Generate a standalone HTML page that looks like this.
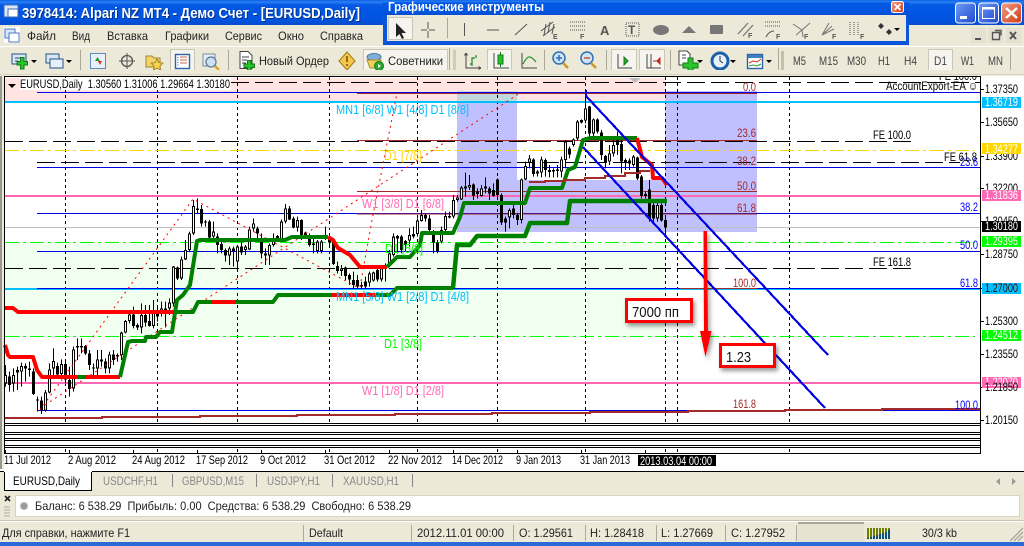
<!DOCTYPE html>
<html><head><meta charset="utf-8"><title>MT4</title>
<style>
html,body{margin:0;padding:0;background:#ece9d8}
svg{display:block}
text{font-family:"Liberation Sans",sans-serif;font-size:12px}
.ui{fill:#222}
.tf{fill:#444}
.ax{fill:#000;font-size:12px}
.w{fill:#fff;font-size:12px}
.br{fill:#a52a2a;font-size:11.5px}
.bl{fill:#0000ff;font-size:11.5px}
.mm{font-size:12.5px}
.c{shape-rendering:crispEdges}
</style></head><body>
<svg xmlns="http://www.w3.org/2000/svg" width="1024" height="546" viewBox="0 0 1024 546">
<defs>
<linearGradient id="tb" x1="0" y1="0" x2="0" y2="1"><stop offset="0" stop-color="#0a5fe8"/><stop offset=".08" stop-color="#2a80f4"/><stop offset=".2" stop-color="#0558e4"/><stop offset=".8" stop-color="#0054e0"/><stop offset="1" stop-color="#0a4ccc"/></linearGradient>
<linearGradient id="bb" x1="0" y1="0" x2="1" y2="1"><stop offset="0" stop-color="#6f9bf5"/><stop offset="1" stop-color="#1e49d0"/></linearGradient>
<linearGradient id="rb" x1="0" y1="0" x2="1" y2="1"><stop offset="0" stop-color="#f0a08a"/><stop offset="1" stop-color="#d03a14"/></linearGradient>
<filter id="sh" x="-30%" y="-30%" width="170%" height="170%"><feDropShadow dx="2" dy="3" stdDeviation="2" flood-color="#000" flood-opacity=".4"/></filter>
</defs>
<rect width="1024" height="546" fill="#ece9d8"/>

<!-- title bar -->
<rect width="1024" height="25" fill="url(#tb)"/>
<rect x="4" y="5" width="14" height="12" fill="#dbe6f8" stroke="#3b6db5"/>
<rect x="8" y="9" width="10" height="8" fill="#fff" stroke="#3b6db5"/>
<text x="22" y="18" font-weight="bold" style="font-size:15px" fill="#00308a" textLength="338" lengthAdjust="spacingAndGlyphs" transform="translate(1 1)">3978414: Alpari NZ MT4 - Демо Счет - [EURUSD,Daily]</text>
<text x="22" y="18" font-weight="bold" style="font-size:15px" fill="#fff" textLength="338" lengthAdjust="spacingAndGlyphs">3978414: Alpari NZ MT4 - Демо Счет - [EURUSD,Daily]</text>
<rect x="955.5" y="3" width="20" height="20" rx="3" fill="url(#bb)" stroke="#fff"/><rect x="960" y="16" width="7" height="3" fill="#fff"/>
<rect x="978.5" y="3" width="20" height="20" rx="3" fill="url(#bb)" stroke="#fff"/><rect x="982.5" y="7.5" width="12" height="11" fill="none" stroke="#fff"/><rect x="982" y="7" width="13" height="2.5" fill="#fff"/>
<rect x="1001.5" y="3" width="20" height="20" rx="3" fill="url(#rb)" stroke="#fff"/><path d="M1006 8l11 10M1017 8l-11 10" stroke="#fff" stroke-width="2.4"/>

<!-- menu -->
<rect y="25" width="1024" height="21" fill="#ece9d8"/>
<rect x="4" y="27" width="16" height="16" fill="#fff"/>
<rect x="5" y="29" width="10" height="9" fill="#dbe6f8" stroke="#4a7ac0"/><rect x="9" y="33" width="10" height="9" fill="#fff" stroke="#4a7ac0"/>
<g class="ui">
<text x="27" y="40" class="ui" textLength="29" lengthAdjust="spacingAndGlyphs">Файл</text>
<text x="72" y="40" class="ui" textLength="18" lengthAdjust="spacingAndGlyphs">Вид</text>
<text x="107" y="40" class="ui" textLength="41" lengthAdjust="spacingAndGlyphs">Вставка</text>
<text x="165" y="40" class="ui" textLength="44" lengthAdjust="spacingAndGlyphs">Графики</text>
<text x="225" y="40" class="ui" textLength="37" lengthAdjust="spacingAndGlyphs">Сервис</text>
<text x="278" y="40" class="ui" textLength="26" lengthAdjust="spacingAndGlyphs">Окно</text>
<text x="320" y="40" class="ui" textLength="43" lengthAdjust="spacingAndGlyphs">Справка</text>
</g>
<rect x="971" y="28" width="15" height="15" fill="#e4e1d2"/><rect x="975" y="38" width="6" height="2" fill="#555"/>
<rect x="988" y="28" width="15" height="15" fill="#e4e1d2"/><path d="M992.5 32.5h7v7h-7zM995 30.5h6v5" fill="none" stroke="#555" stroke-width="1.4"/>
<rect x="1006" y="28" width="15" height="15" fill="#e4e1d2"/><path d="M1010 32l6 7M1016 32l-6 7" stroke="#555" stroke-width="2"/>

<!-- main toolbar -->
<rect y="46" width="1024" height="1" fill="#fff"/>
<rect y="47" width="1024" height="29" fill="#ece9d8"/>
<rect y="74" width="1024" height="1" fill="#d8d4c0"/>
<path class="c" d="M80.5 50v22M228.5 50v22M449.5 48v26M544.5 50v22M606.5 50v22M670.5 50v22M778.5 48v26M1010.5 48v26" stroke="#aca899"/>
<!-- highlighted buttons -->
<g class="c" fill="#f5f4ee" stroke="#c9c7b8">
<rect x="170.5" y="49.5" width="24" height="22"/>
<rect x="363.5" y="49.5" width="84" height="22"/>
<rect x="487.5" y="49.5" width="24" height="22"/>
<rect x="611.5" y="49.5" width="25" height="22"/>
<rect x="639.5" y="49.5" width="25" height="22"/>
<rect x="928.5" y="49.5" width="24" height="22"/>
</g>
<!-- new chart -->
<rect x="12" y="54" width="14" height="10" fill="#d9e6f7" stroke="#26527f"/>
<path d="M15 58h5M15 61h3" stroke="#26527f"/>
<path d="M20.5 57.5h3.5v4h3.5v3.5h-3.500v4h-3.500v-4h-3.500v-3.500h3.500z" fill="#29c42e" stroke="#137a18"/>
<path d="M31 60h6l-3 3z" fill="#000"/>
<!-- profiles -->
<rect x="46" y="54" width="13" height="9" fill="#d9e6f7" stroke="#26527f"/><rect x="50" y="59" width="13" height="9" fill="#e8effa" stroke="#26527f"/>
<path d="M66 60h6l-3 3z" fill="#000"/>
<!-- market watch -->
<rect x="90.5" y="53.5" width="15" height="15" fill="#e8f1fb" stroke="#5d8bbf"/><path d="M95 61l2.500-4 2.500 4z" fill="#1a9a28"/><path d="M98 61h4l-2 4z" fill="#d0301c"/>
<!-- crosshair -->
<circle cx="127" cy="61" r="5.500" fill="none" stroke="#555" stroke-width="1.300"/><path d="M127 53v16M119 61h16" stroke="#555"/>
<!-- folder star -->
<path d="M146 56h6l2 2h6v9h-14z" fill="#f2d46e" stroke="#a58328"/><path d="M157 59l1.800 3.600 4 .6-2.900 2.800.7 4-3.600-1.900-3.600 1.900.7-4-2.900-2.800 4-.6z" fill="#f7d64a" stroke="#a58328"/>
<!-- navigator -->
<rect x="175.500" y="54.500" width="14" height="14" fill="#fff" stroke="#2c62a6" stroke-width="1.400"/><path d="M178 57v9" stroke="#2c62a6" stroke-dasharray="1 1.500"/><path d="M180 57h7M180 60h7M180 63h7" stroke="#d06a50"/>
<!-- data window -->
<rect x="203" y="54" width="12" height="12" fill="#e8eef5" stroke="#7a8a9a"/><circle cx="211" cy="62" r="5" fill="#cfe0f2" stroke="#5a7a9a" stroke-width="1.300"/><path d="M215 66l4 4" stroke="#d9a520" stroke-width="2.400"/>
<!-- new order -->
<path d="M240 51.500h8l4 4v13h-12z" fill="#fff" stroke="#444"/><path d="M242 57h7M242 60h5M242 63h4" stroke="#444"/>
<path d="M247.500 60.500h3.500v3.500h3.500v3.500h-3.500v3.500h-3.500v-3.500h-3.500v-3.500h3.500z" fill="#29c42e" stroke="#137a18"/>
<text x="259" y="65" class="ui" textLength="70" lengthAdjust="spacingAndGlyphs">Новый Ордер</text>
<!-- alert -->
<path d="M347 52l8 9-8 9-8-9z" fill="#f5c84c" stroke="#a07818"/><path d="M347 56v6M347 64v2" stroke="#7a5510" stroke-width="1.600"/>
<!-- experts -->
<ellipse cx="374" cy="57" rx="7" ry="3.500" fill="#7fb0d8" stroke="#4a789f"/><path d="M367 60l14 0-2 8h-9z" fill="#f0d060" stroke="#b08a20"/><circle cx="379" cy="66" r="4.500" fill="#2aa82e" stroke="#137a18"/><path d="M378 64l3 2-3 2z" fill="#fff"/>
<text x="388" y="65" class="ui" textLength="55" lengthAdjust="spacingAndGlyphs">Советники</text>
<!-- chart type icons -->
<g fill="none" stroke="#444"><path d="M466 53v15h15M466 53l-1.500 2.500M466 53l1.500 2.500M481 68l-2.500-1.500M481 68l-2.500 1.500"/><path d="M494 53v15h15M522 53v15h15"/></g>
<path d="M472 66v-8h3M470 64h2M476 58v-3" stroke="#1a8a28" fill="none" stroke-width="1.200"/>
<rect x="498" y="55" width="5" height="9" fill="#27c02e" stroke="#137a18"/><path d="M500.500 52v3M500.500 64v3" stroke="#137a18"/>
<path d="M523 64q4-8 7-7t6 5" stroke="#2a9a2e" fill="none" stroke-width="1.300"/>
<!-- zoom -->
<circle cx="559" cy="58" r="6" fill="#cfe3f7" stroke="#2c6fb7" stroke-width="1.500"/><path d="M556 58h6M559 55v6" stroke="#2c6fb7" stroke-width="1.500"/><path d="M563 63l5 5" stroke="#c89a20" stroke-width="2.600"/>
<circle cx="587" cy="58" r="6" fill="#cfe3f7" stroke="#2c6fb7" stroke-width="1.500"/><path d="M584 58h6" stroke="#d0581c" stroke-width="1.500"/><path d="M591 63l5 5" stroke="#c89a20" stroke-width="2.600"/>
<!-- autoscroll / shift -->
<g fill="none" stroke="#444"><path d="M618 54v14h14M647 54v14h14M651 54v14"/></g>
<path d="M624 57l4 4-4 4z" fill="#2aa82e" stroke="#137a18"/>
<path d="M657 61h-4M660 58l-3 3 3 3z" fill="#c02a14" stroke="#c02a14"/>
<!-- template -->
<path d="M679 51h8l3 3v11h-11z" fill="#fff" stroke="#444"/><path d="M682 58h4M682 55h4" stroke="#444"/>
<path d="M683 63h5v-5h5v5h5v5h-5v5h-5v-5h-5z" fill="#29c42e" stroke="#137a18"/>
<path d="M697 60h6l-3 3z" fill="#000"/>
<!-- clock -->
<circle cx="720" cy="61" r="8" fill="#e8f1fb" stroke="#1d5fa8" stroke-width="3"/><path d="M720 56v5l3 2" stroke="#333" fill="none"/>
<path d="M730 60h6l-3 3z" fill="#000"/>
<!-- indicators -->
<rect x="747.500" y="54.500" width="15" height="14" fill="#fff" stroke="#2c62a6" stroke-width="1.400"/><rect x="748" y="55" width="14" height="3" fill="#3e7fc0"/><path d="M749 63l4-2 4 1 4-3" stroke="#d0301c" fill="none"/><path d="M749 66l4-1 4 1 4-2" stroke="#2a9a2e" fill="none"/>
<path d="M766 60h6l-3 3z" fill="#000"/>
<rect x="781" y="51" width="3" height="20" fill="#c4c0ac"/>
<rect x="453" y="50" width="3" height="20" fill="#d0ccb8"/>
<g class="tf">
<text x="793" y="65" textLength="13" lengthAdjust="spacingAndGlyphs">M5</text>
<text x="819" y="65" textLength="19" lengthAdjust="spacingAndGlyphs">M15</text>
<text x="847" y="65" textLength="19" lengthAdjust="spacingAndGlyphs">M30</text>
<text x="878" y="65" textLength="12" lengthAdjust="spacingAndGlyphs">H1</text>
<text x="904" y="65" textLength="13" lengthAdjust="spacingAndGlyphs">H4</text>
<text x="934" y="65" textLength="13" lengthAdjust="spacingAndGlyphs">D1</text>
<text x="961" y="65" textLength="13" lengthAdjust="spacingAndGlyphs">W1</text>
<text x="988" y="65" textLength="15" lengthAdjust="spacingAndGlyphs">MN</text>
</g>

<!-- floating toolbar -->
<rect x="383" y="0" width="526" height="45" fill="#0a55dc"/>
<rect x="383" y="0" width="526" height="15" fill="url(#tb)"/>
<rect x="387" y="15" width="519" height="26" fill="#ece9d8"/>
<text x="388" y="11" font-weight="bold" fill="#fff" style="font-size:12.500px" textLength="156" lengthAdjust="spacingAndGlyphs">Графические инструменты</text>
<rect x="891.500" y="1.500" width="12" height="11" rx="2" fill="url(#rb)" stroke="#fff"/><path d="M894.500 4l6 6M900.500 4l-6 6" stroke="#fff" stroke-width="1.600"/>
<rect class="c" x="388.500" y="17.500" width="24" height="22" fill="#f5f4ee" stroke="#c9c7b8"/>
<path d="M396 23v14l3.500-3 2.500 5 2-1-2.500-5h4.500z" fill="#222"/>
<path d="M428 22v7M428 31v7M421 30h6M429 30h6" stroke="#555"/>
<path class="c" d="M447.500 18v20" stroke="#aca899"/>
<path d="M464.500 23v13" stroke="#555"/>
<path d="M487 30h12" stroke="#555"/>
<path d="M515 35l12-11" stroke="#555"/>
<g stroke="#555" fill="none"><path d="M541 31l12-9M543 36l12-9M546 24l-2 11M550 22l-2 11M554 24l-2 10"/></g>
<text x="553" y="39" style="font-size:7px" fill="#555" font-weight="bold">E</text>
<path d="M570 22h15M570 26h15M570 30h15" stroke="#555" stroke-dasharray="1 1"/>
<text x="580" y="39" style="font-size:7px" fill="#555" font-weight="bold">F</text>
<text x="600" y="35" style="font-size:13px" fill="#555" font-weight="bold">A</text>
<rect x="626" y="23" width="13" height="13" fill="none" stroke="#555" stroke-dasharray="1 1"/><text x="628" y="34" style="font-size:12px" fill="#555" font-weight="bold">T</text>
<ellipse cx="661" cy="30" rx="8" ry="5" fill="#777"/>
<path d="M682 33l7-7 7 7z" fill="#777"/>
<rect x="710" y="25" width="13" height="9" rx="1" fill="#777"/>
<path d="M738 34l10-11M743 36l10-11" stroke="#777" stroke-width="1.300"/><text x="748" y="38" style="font-size:7px" fill="#555" font-weight="bold">F</text>
<path d="M765 22h15M765 26h15" stroke="#555" stroke-dasharray="1 1"/><path d="M766 37q3-6 8-6" stroke="#555" fill="none"/><text x="776" y="39" style="font-size:7px" fill="#555" font-weight="bold">F</text>
<path d="M793 24l9 6 8-7M796 35l6-5 1 7" stroke="#777" fill="none"/><text x="804" y="39" style="font-size:7px" fill="#555" font-weight="bold">F</text>
<path d="M822 35l10-9M822 35l12-6M822 35l7-12" stroke="#777" fill="none"/><text x="832" y="39" style="font-size:7px" fill="#555" font-weight="bold">F</text>
<path d="M850 22v13M854 22v13M858 22v13" stroke="#555" stroke-dasharray="1 1"/><text x="860" y="39" style="font-size:7px" fill="#555" font-weight="bold">F</text>
<path d="M881 23l3 3-3 3-3-3zM889 29l3 3-3 3-3-3z" fill="#333"/><path d="M894 28h6l-3 3z" fill="#000"/>

<!-- chart area -->
<rect x="4" y="76" width="1020" height="393" fill="#fff"/>
<rect x="0" y="76" width="2" height="394" fill="#9a988c"/>
<rect class="c" x="5" y="78" width="660" height="24" fill="#ffe4e1"/>
<rect class="c" x="5" y="243" width="660" height="93" fill="#f0fff0"/>
<rect class="c" x="457" y="91" width="60" height="141" fill="#c0c0ff"/>
<rect class="c" x="665" y="91" width="92" height="141" fill="#c0c0ff"/>
<rect class="c" x="517" y="180" width="148" height="52" fill="#c0c0ff"/>
<rect class="c" x="457" y="91" width="60" height="11" fill="#c0d8dc"/>
<path d="M629 78h12l-6 5z" fill="#bbb"/>

<!-- vertical dashes -->
<path class="c" d="M65.500 77V453M157.500 77V453M237.500 77V453M329.500 77V453M417.500 77V453M497.500 77V453M585.500 77V453M665.500 77V453M677.500 77V453M789.500 77V453" stroke="#000" stroke-dasharray="3 3" fill="none"/>

<!-- horizontals -->
<g class="c" fill="none">
<path d="M231 82.500H980" stroke="#000" stroke-dasharray="18 6"/>
<path d="M37 92.500H980" stroke="#0000e6"/>
<path d="M5 102H980" stroke="#00bfff" stroke-width="2"/>
<path d="M5 141.500H913" stroke="#000" stroke-dasharray="18 6"/>
<path d="M5 150.500H975" stroke="#ffd700" stroke-dasharray="14 4 3 4"/>
<path d="M37 162.500H960" stroke="#000" stroke-dasharray="18 6"/>
<path d="M37 167.500H980" stroke="#0000e6"/>
<path d="M5 196H980" stroke="#ff69b4" stroke-width="2"/>
<path d="M37 213.500H980" stroke="#0000e6"/>
<path d="M5 227.500H980" stroke="#c0c0c0"/>
<path d="M5 242.500H975" stroke="#00ff00" stroke-dasharray="14 4 3 4"/>
<path d="M37 251.500H980" stroke="#0000e6"/>
<path d="M5 268.500H913" stroke="#000" stroke-dasharray="18 6"/>
<path d="M5 289H980" stroke="#00bfff" stroke-width="2"/>
<path d="M37 288.500H980" stroke="#0000e6"/>
<path d="M5 336.500H975" stroke="#00ff00" stroke-dasharray="14 4 3 4"/>
<path d="M5 383H980" stroke="#ff69b4" stroke-width="2"/>
<path d="M37 410.500H688M882 410.500H980" stroke="#0000e6"/>
<path d="M357 93.500H757M357 140.500H757M357 191.500H757M357 214H757M680 288.500H757" stroke="#a52a2a"/>
<path d="M5 418H102V417H200V416H297V415H395V414H492V413H590V412H688V411H785V410H882V409H980" stroke="#a52a2a" stroke-width="2"/>
</g>

<!-- candles group A (y in 3x coordinates) -->
<g class="c" transform="translate(0 190) scale(1 .33333)" fill="none">
<path stroke="#000" d="M5.500 525V590M9.500 545V605M13.500 535V605M17.500 530V600M21.500 518V590M25.500 520V575M29.500 515V560M33.500 535V615M37.500 620V665M41.500 620V672M45.500 600V665M49.500 520V610M53.500 475V560M57.500 518V565M61.500 508V560M65.500 510V580M69.500 530V620M73.500 470V605M77.500 445V510M81.500 445V490M85.500 465V495M89.500 480V540M93.500 520V555M97.500 480V555M101.500 480V530M105.500 505V550M109.500 485V550M113.500 480V525M117.500 490V515M121.500 425V510M125.500 390V430M129.500 360V400M133.500 350V415M137.500 400V420M141.500 340V430M145.500 345V410M149.500 345V410M153.500 330V415M157.500 345V395M161.500 335V380M165.500 335V412M169.500 325V375M173.500 228V350M177.500 230V270M181.500 200V270M185.500 150V210M189.500 125V185M193.500 30V135M197.500 25V70M201.500 45V110M205.500 90V110M209.500 90V150M213.500 95V145M217.500 130V190M221.500 155V190M225.500 175V215M229.500 170V225M233.500 170V230M237.500 165V245M241.500 155V195M245.500 165V195M249.500 110V180M253.500 85V125M257.500 110V145M261.500 130V205M265.500 175V225M269.500 160V225M273.500 130V170M277.500 135V150M281.500 88V150M285.500 42V100M289.500 48V90M293.500 80V115M297.500 80V125M301.500 88V150M305.500 125V140M309.500 130V170M313.500 135V190M317.500 150V190M321.500 150V190M325.500 110V150M329.500 135V170M333.500 155V225M337.500 215V250M341.500 225V258M345.500 230V270M349.500 250V285"/>
<path stroke="#000" stroke-width="3" d="M5.500 555V580M9.500 560V585M13.500 555V580M17.500 540V548M21.500 528V545M25.500 528V535M29.500 535V540M33.500 545V612M37.500 628V632M41.500 632V662M45.500 607V662M49.500 538V608M53.500 513V535M57.500 528V553M61.500 522V552M65.500 522V568M69.500 570V597M73.500 478V595M77.500 468V472M81.500 468V472M85.500 468V490M89.500 490V525M93.500 532V535M97.500 508V535M101.500 508V515M105.500 515V535M109.500 493V535M113.500 493V510M117.500 495V500M121.500 428V495M125.500 393V428M129.500 373V393M133.500 373V408M137.500 405V412M141.500 375V412M145.500 375V398M149.500 393V408M153.500 368V408M157.500 370V380M161.500 355V365M165.500 355V372M169.500 338V355M173.500 230V340M177.500 232V265M181.500 208V265M185.500 180V208M189.500 130V180M193.500 48V130M197.500 55V60M201.500 57V100M205.500 95V98M209.500 95V142M213.500 125V140M217.500 140V165M221.500 162V180M225.500 180V197M229.500 175V197M233.500 175V183M237.500 170V215M241.500 170V187M245.500 170V180M249.500 118V178M253.500 100V115M257.500 115V130M261.500 150V190M265.500 190V197M269.500 165V197M273.500 150V165M277.500 138V148M281.500 95V148M285.500 55V95M289.500 55V88M293.500 85V112M297.500 90V112M301.500 90V135M305.500 128V135M309.500 135V165M313.500 160V165M317.500 155V183M321.500 155V183M325.500 135V145M329.500 148V158M333.500 158V222M337.500 228V243M341.500 235V243M345.500 232V258M349.500 255V268"/>
<path stroke="#fff" d="M5.500 558V577M13.500 558V577M21.500 531V542M45.500 610V659M49.500 541V605M53.500 516V532M61.500 525V549M73.500 481V592M97.500 511V532M109.500 496V532M121.500 431V492M125.500 396V425M129.500 376V390M141.500 378V409M153.500 371V405M161.500 358V362M169.500 341V352M173.500 233V337M181.500 211V262M185.500 183V205M189.500 133V177M193.500 51V127M213.500 128V137M229.500 178V194M237.500 173V212M245.500 173V177M249.500 121V175M253.500 103V112M269.500 168V194M273.500 153V162M281.500 98V145M285.500 58V92M297.500 93V109M317.500 158V180M321.500 158V180M325.500 138V142M341.500 238V240"/>
</g>
<!-- candles group B -->
<g class="c" transform="translate(0 90) scale(1 .33333)" fill="none">
<path stroke="#000" d="M353.500 545V595M357.500 555V595M361.500 575V595M365.500 560V595M369.500 545V590M373.500 545V575M377.500 535V575M381.500 530V575M385.500 520V575M389.500 480V525M393.500 430V500M397.500 435V490M401.500 435V490M405.500 450V485M409.500 415V470M413.500 410V445M417.500 385V440M421.500 360V395M425.500 370V395M429.500 375V430M433.500 420V490M437.500 450V490M441.500 410V460M445.500 365V425M449.500 365V385M453.500 315V385M457.500 315V335M461.500 288V330M465.500 248V320M469.500 255V300M473.500 280V330M477.500 295V325M481.500 285V320M485.500 262V310M489.500 290V330M493.500 280V320M497.500 265V320M501.500 310V405M505.500 380V425M509.500 355V415M513.500 345V385M517.500 370V405M521.500 265V400M525.500 215V270M529.500 195V235M533.500 205V260M537.500 240V260M541.500 200V262M545.500 205V260M549.500 225V262M553.500 235V262M557.500 225V262M561.500 200V262M565.500 150V235M569.500 170V205M573.500 145V170M577.500 90V150M581.500 88V100M585.500 15V100M589.500 48V140M593.500 85V140M597.500 85V130M601.500 120V210M605.500 195V235M609.500 165V225M613.500 150V200M617.500 125V195M621.500 140V250M625.500 205V240M629.500 205V240M633.500 195V230M637.500 200V270M641.500 255V325M645.500 305V325M649.500 270V395M653.500 330V395M657.500 335V395M661.500 340V395M665.500 375V440"/>
<path stroke="#000" stroke-width="3" d="M353.500 570V585M357.500 570V590M361.500 585V590M365.500 575V590M369.500 550V578M373.500 548V572M377.500 540V568M381.500 535V568M385.500 525V532M389.500 490V523M393.500 440V495M397.500 438V445M401.500 440V480M405.500 453V465M409.500 435V452M413.500 432V440M417.500 392V432M421.500 375V393M425.500 375V385M429.500 385V420M433.500 430V458M437.500 458V485M441.500 420V455M445.500 378V420M449.500 378V382M453.500 330V380M457.500 322V330M461.500 293V328M465.500 290V295M469.500 285V293M473.500 283V318M477.500 305V312M481.500 295V318M485.500 290V296M489.500 295V310M493.500 300V318M497.500 268V315M501.500 315V398M505.500 385V398M509.500 360V382M513.500 355V375M517.500 375V390M521.500 268V390M525.500 228V268M529.500 205V218M533.500 208V252M537.500 245V250M541.500 208V248M545.500 210V240M549.500 240V246M553.500 240V245M557.500 238V243M561.500 208V245M565.500 155V210M569.500 175V193M573.500 148V165M577.500 95V145M581.500 90V98M585.500 55V92M589.500 50V130M593.500 88V130M597.500 88V125M601.500 128V195M605.500 198V218M609.500 190V215M613.500 165V190M617.500 145V165M621.500 162V215M625.500 210V218M629.500 212V220M633.500 200V225M637.500 202V265M641.500 260V318M645.500 312V318M649.500 298V385M653.500 345V385M657.500 345V385M661.500 345V392M665.500 390V412"/>
<path stroke="#fff" d="M369.500 553V575M373.500 551V569M381.500 538V565M389.500 493V520M393.500 443V492M409.500 438V449M417.500 395V429M421.500 378V390M441.500 423V452M445.500 381V417M453.500 333V377M457.500 325V327M461.500 296V325M469.500 288V290M481.500 298V315M509.500 363V379M521.500 271V387M525.500 231V265M529.500 208V215M541.500 211V245M561.500 211V242M565.500 158V207M573.500 151V162M577.500 98V142M585.500 58V89M593.500 91V127M609.500 193V212M613.500 168V187M633.500 203V222M657.500 348V382"/>
</g>

<!-- red zigzag dotted -->
<path d="M40 410L193 199L357 287M45 405L520 93M360 287L372 220L397 93" fill="none" stroke="#f00" stroke-dasharray="2 4"/>

<!-- indicator thick lines -->
<g fill="none" stroke-width="4" stroke-linejoin="round">
<path stroke="#ff0000" d="M5 345L8 355L10 357H33L37 370L42 377H120"/>
<path stroke="#008000" d="M78 377H85M120 377L128 342L132 341H145L146 337H156L160 332H172L177 300L183 295L190 285L197 241L200 240H285L292 237H328"/>
<path stroke="#ff0000" d="M328 237L333 240L338 248L350 255L360 267H387"/>
<path stroke="#008000" d="M387 267L397 257H410L420 245L422 233H453L460 217L464 203H525L530 188H562L568 170L575 167L583 140L590 138H637"/>
<path stroke="#ff0000" d="M637 138L642 157L652 165L653 178H662L667 185"/>
<path stroke="#ff0000" d="M5 308H13L18 312H173"/>
<path stroke="#008000" d="M173 312H193L198 302H212M236 302H273L278 295H332M375 295H390L397 288H453"/>
<path stroke="#ff0000" d="M212 302H236M332 295H375"/>
<path stroke="#008000" d="M453 288L457 245H470L477 236H525L530 223H567L570 201H667" stroke-width="4.500"/>
</g>
<path class="c" d="M529 182H545V181H565V180H585V178H605V176H625V173H640V171H650" fill="none" stroke="#a52a2a" stroke-width="2"/>

<!-- channel -->
<path class="c" d="M586 96L828 355M583 147L825 408M586 96V90" fill="none" stroke="#0000e6" stroke-width="2.200"/>

<!-- labels in chart -->
<rect x="20" y="78" width="211" height="12" fill="#fff"/>
<path d="M8 84h8l-4 4z" fill="#000"/>
<text x="20" y="88" class="ax" textLength="210" lengthAdjust="spacingAndGlyphs" xml:space="preserve">EURUSD,Daily  1.30560 1.31006 1.29664 1.30180</text>
<text x="886" y="90" class="ax" textLength="92" lengthAdjust="spacingAndGlyphs">AccountExport-EA ☺</text>

<text x="336" y="114" class="mm" fill="#00bfff" textLength="133" lengthAdjust="spacingAndGlyphs">MN1 [6/8] W1 [4/8] D1 [8/8]</text>
<text x="384" y="160" class="mm" fill="#ffd700" textLength="38" lengthAdjust="spacingAndGlyphs">D1 [7/8]</text>
<text x="362" y="208" class="mm" fill="#ff69b4" textLength="82" lengthAdjust="spacingAndGlyphs">W1 [3/8] D1 [6/8]</text>
<text x="385" y="253" class="mm" fill="#00ff00" textLength="38" lengthAdjust="spacingAndGlyphs">D1 [5/8]</text>
<text x="336" y="301" class="mm" fill="#00bfff" textLength="133" lengthAdjust="spacingAndGlyphs">MN1 [5/8] W1 [2/8] D1 [4/8]</text>
<text x="384" y="348" class="mm" fill="#00ff00" textLength="38" lengthAdjust="spacingAndGlyphs">D1 [3/8]</text>
<text x="362" y="395" class="mm" fill="#ff69b4" textLength="82" lengthAdjust="spacingAndGlyphs">W1 [1/8] D1 [2/8]</text>

<g class="br">
<text x="743" y="91" textLength="13" lengthAdjust="spacingAndGlyphs">0.0</text>
<text x="737" y="137" textLength="19" lengthAdjust="spacingAndGlyphs">23.6</text>
<text x="737" y="165" textLength="19" lengthAdjust="spacingAndGlyphs">38.2</text>
<text x="737" y="190" textLength="19" lengthAdjust="spacingAndGlyphs">50.0</text>
<text x="737" y="212" textLength="19" lengthAdjust="spacingAndGlyphs">61.8</text>
<text x="733" y="287" textLength="23" lengthAdjust="spacingAndGlyphs">100.0</text>
<text x="733" y="408" textLength="23" lengthAdjust="spacingAndGlyphs">161.8</text>
</g>
<g class="bl">
<text x="960" y="166" textLength="18" lengthAdjust="spacingAndGlyphs">23.6</text>
<text x="960" y="211" textLength="18" lengthAdjust="spacingAndGlyphs">38.2</text>
<text x="960" y="249" textLength="18" lengthAdjust="spacingAndGlyphs">50.0</text>
<text x="960" y="287" textLength="18" lengthAdjust="spacingAndGlyphs">61.8</text>
<text x="955" y="409" textLength="23" lengthAdjust="spacingAndGlyphs">100.0</text>
</g>
<text x="873" y="139" class="ax" textLength="38" lengthAdjust="spacingAndGlyphs">FE 100.0</text>
<text x="944" y="161" class="ax" textLength="33" lengthAdjust="spacingAndGlyphs">FE 61.8</text>
<text x="873" y="266" class="ax" textLength="38" lengthAdjust="spacingAndGlyphs">FE 161.8</text>
<text x="939" y="80" class="ax" textLength="38" lengthAdjust="spacingAndGlyphs">FE 100.0</text>

<!-- frames -->
<rect x="0" y="70" width="1024" height="6" fill="#ece9d8"/>
<rect x="0" y="74" width="1024" height="1" fill="#d8d4c0"/>
<rect x="5" y="424" width="975" height="23" fill="#fff"/>
<g class="c" fill="none" stroke="#000">
<path d="M4.500 76.500H980.500V453.500H4.500Z"/>
<path d="M4.500 423.500H980M4.500 425.500H980M4.500 432.500H980M4.500 434.500H980M4.500 438.500H980M4.500 440.500H980M4.500 445.500H980M4.500 447.500H980"/>
<path d="M5.500 450V454M69.500 450V454M133.500 450V454M197.500 450V454M261.500 450V454M325.500 450V454M389.500 450V454M453.500 450V454M517.500 450V454M581.500 450V454M645.500 450V454"/>
</g>

<!-- price ticks and labels -->
<path class="c" d="M980 89.500h4M980 122.500h4M980 156.500h4M980 188.500h4M980 221.500h4M980 254.500h4M980 288.500h4M980 321.500h4M980 354.500h4M980 387.500h4M980 420.500h4" stroke="#000"/>
<g class="ax">
<text x="985" y="93" textLength="33" lengthAdjust="spacingAndGlyphs">1.37350</text>
<text x="985" y="126" textLength="33" lengthAdjust="spacingAndGlyphs">1.35650</text>
<text x="985" y="160" textLength="33" lengthAdjust="spacingAndGlyphs">1.33900</text>
<text x="985" y="192" textLength="33" lengthAdjust="spacingAndGlyphs">1.32200</text>
<text x="985" y="225" textLength="33" lengthAdjust="spacingAndGlyphs">1.30450</text>
<text x="985" y="258" textLength="33" lengthAdjust="spacingAndGlyphs">1.28750</text>
<text x="985" y="325" textLength="33" lengthAdjust="spacingAndGlyphs">1.25300</text>
<text x="985" y="358" textLength="33" lengthAdjust="spacingAndGlyphs">1.23550</text>
<text x="985" y="424" textLength="33" lengthAdjust="spacingAndGlyphs">1.20150</text>
</g>
<g class="c">
<rect x="982" y="97" width="39" height="11" fill="#00bfff"/>
<rect x="982" y="143" width="39" height="11" fill="#ffd700"/>
<rect x="982" y="190" width="39" height="11" fill="#ff69b4"/>
<rect x="982" y="221" width="39" height="11" fill="#000"/>
<rect x="982" y="236" width="39" height="11" fill="#00ff00"/>
<rect x="982" y="283" width="39" height="11" fill="#00bfff"/>
<rect x="982" y="330" width="39" height="11" fill="#00ff00"/>
<rect x="982" y="377" width="39" height="11" fill="#ff69b4"/>
</g>
<g class="w">
<text x="985" y="106" textLength="33" lengthAdjust="spacingAndGlyphs">1.36719</text>
<text x="985" y="153" textLength="33" lengthAdjust="spacingAndGlyphs">1.34277</text>
<text x="985" y="199" textLength="33" lengthAdjust="spacingAndGlyphs">1.31836</text>
<text x="985" y="230" textLength="33" lengthAdjust="spacingAndGlyphs">1.30180</text>
<text x="985" y="245" textLength="33" lengthAdjust="spacingAndGlyphs">1.29395</text>
<text x="985" y="292" textLength="33" lengthAdjust="spacingAndGlyphs">1.27000</text>
<text x="985" y="339" textLength="33" lengthAdjust="spacingAndGlyphs">1.24512</text>
<text x="985" y="386" textLength="33" lengthAdjust="spacingAndGlyphs">1.22070</text>
</g>
<g class="ax">
<text x="985" y="292" textLength="33" lengthAdjust="spacingAndGlyphs">1.27000</text>
<text x="985" y="391" textLength="33" lengthAdjust="spacingAndGlyphs">1.21850</text>
</g>

<!-- time labels -->
<g class="ax">
<text x="4" y="464" textLength="47" lengthAdjust="spacingAndGlyphs">11 Jul 2012</text>
<text x="68" y="464" textLength="48" lengthAdjust="spacingAndGlyphs">2 Aug 2012</text>
<text x="132" y="464" textLength="53" lengthAdjust="spacingAndGlyphs">24 Aug 2012</text>
<text x="196" y="464" textLength="52" lengthAdjust="spacingAndGlyphs">17 Sep 2012</text>
<text x="260" y="464" textLength="46" lengthAdjust="spacingAndGlyphs">9 Oct 2012</text>
<text x="324" y="464" textLength="51" lengthAdjust="spacingAndGlyphs">31 Oct 2012</text>
<text x="388" y="464" textLength="54" lengthAdjust="spacingAndGlyphs">22 Nov 2012</text>
<text x="452" y="464" textLength="51" lengthAdjust="spacingAndGlyphs">14 Dec 2012</text>
<text x="516" y="464" textLength="45" lengthAdjust="spacingAndGlyphs">9 Jan 2013</text>
<text x="580" y="464" textLength="50" lengthAdjust="spacingAndGlyphs">31 Jan 2013</text>
</g>
<rect class="c" x="638" y="455" width="78" height="11" fill="#000"/>
<text x="640" y="465" class="w" textLength="72" lengthAdjust="spacingAndGlyphs">2013.03.04 00:00</text>

<!-- annotations -->
<g filter="url(#sh)">
<path d="M703.500 231h3.500l1 100h3.500l-6 26-5.500-26h4z" fill="#ff0000"/>
</g>
<g filter="url(#sh)">
<rect x="626.500" y="299.500" width="65" height="22" fill="#fff" stroke="#ff0000" stroke-width="3"/>
<rect x="720.500" y="344.500" width="54" height="22" fill="#fff" stroke="#ff0000" stroke-width="3"/>
</g>
<text x="632" y="317" fill="#111" style="font-size:14.500px" textLength="47" lengthAdjust="spacingAndGlyphs">7000 пп</text>
<text x="726" y="362" fill="#111" style="font-size:14.500px" textLength="25" lengthAdjust="spacingAndGlyphs">1.23</text>

<!-- tabs -->
<rect y="469" width="1024" height="22" fill="#ece9d8"/>
<rect y="469" width="1024" height="2" fill="#fff"/>
<rect class="c" y="471" width="1024" height="1" fill="#000"/>
<rect class="c" x="4" y="471" width="88" height="19" fill="#fff"/>
<path class="c" d="M4.500 472V490.500H91.500V472" fill="none" stroke="#000"/>
<text x="13" y="485" fill="#000" textLength="67" lengthAdjust="spacingAndGlyphs">EURUSD,Daily</text>
<g fill="#888">
<text x="103" y="485" textLength="55" lengthAdjust="spacingAndGlyphs">USDCHF,H1</text>
<text x="182" y="485" textLength="62" lengthAdjust="spacingAndGlyphs">GBPUSD,M15</text>
<text x="267" y="485" textLength="53" lengthAdjust="spacingAndGlyphs">USDJPY,H1</text>
<text x="343" y="485" textLength="56" lengthAdjust="spacingAndGlyphs">XAUUSD,H1</text>
</g>
<path class="c" d="M172.500 474V487M256.500 474V487M332.500 474V487M412.500 474V487" stroke="#888"/>
<path d="M1000 478v7l-4-3.500z" fill="#999"/><path d="M1012 478v7l4-3.500z" fill="#999"/>

<!-- account bar -->
<rect y="491" width="1024" height="30" fill="#ece9d8"/>
<rect class="c" x="15.500" y="495.500" width="1004" height="21" fill="#fff" stroke="#d8d4c0"/>
<path d="M5 496l5 5M10 496l-5 5" stroke="#222" stroke-width="1.600"/>
<path class="c" d="M4 507h6M4 510h6M4 513h6M4 516h6" stroke="#aaa"/>
<circle cx="24" cy="506" r="3.500" fill="#999" stroke="#bbb"/>
<text x="35" y="510" fill="#222" textLength="376" lengthAdjust="spacingAndGlyphs" xml:space="preserve">Баланс: 6 538.29  Прибыль: 0.00  Средства: 6 538.29  Свободно: 6 538.29</text>

<!-- status bar -->
<rect class="c" y="520" width="1024" height="1" fill="#c8c4b0"/>
<rect class="c" y="521" width="1024" height="1" fill="#fff"/>
<rect x="798" y="522" width="66" height="20" fill="#e6e3d3"/><rect class="c" x="798" y="522" width="66" height="2" fill="#a9a796"/>
<path class="c" d="M303.500 525V541M411.500 525V541M513.500 525V541M585.500 525V541M656.500 525V541M725.500 525V541M796.500 525V541" stroke="#aca899"/>
<g class="ui">
<text x="2" y="537" textLength="128" lengthAdjust="spacingAndGlyphs">Для справки, нажмите F1</text>
<text x="309" y="537" textLength="34" lengthAdjust="spacingAndGlyphs">Default</text>
<text x="417" y="537" textLength="87" lengthAdjust="spacingAndGlyphs">2012.11.01 00:00</text>
<text x="519" y="537" textLength="54" lengthAdjust="spacingAndGlyphs">O: 1.29561</text>
<text x="590" y="537" textLength="54" lengthAdjust="spacingAndGlyphs">H: 1.28418</text>
<text x="661" y="537" textLength="52" lengthAdjust="spacingAndGlyphs">L: 1.27669</text>
<text x="731" y="537" textLength="54" lengthAdjust="spacingAndGlyphs">C: 1.27952</text>
<text x="922" y="537" textLength="35" lengthAdjust="spacingAndGlyphs">30/3 kb</text>
</g>
<g class="c">
<path d="M868 528v11M871 528v11M874 528v11M877 528v11M880 528v11M883 528v11M886 528v11M889 528v11" stroke="#6e7f00" stroke-width="2"/>
<path d="M868 539v-1M871 539v-2M874 539v-3M877 539v-4M880 539v-5M883 539v-6M886 539v-7M889 539v-9" stroke="#0c4f7a" stroke-width="2"/>
</g>
<path d="M1010 541L1023 528M1014 541L1023 532M1018 541L1023 536" stroke="#aca899" stroke-width="1.400"/>
<rect y="542" width="1024" height="4" fill="#2a6ad6"/>
</svg>
</body></html>
